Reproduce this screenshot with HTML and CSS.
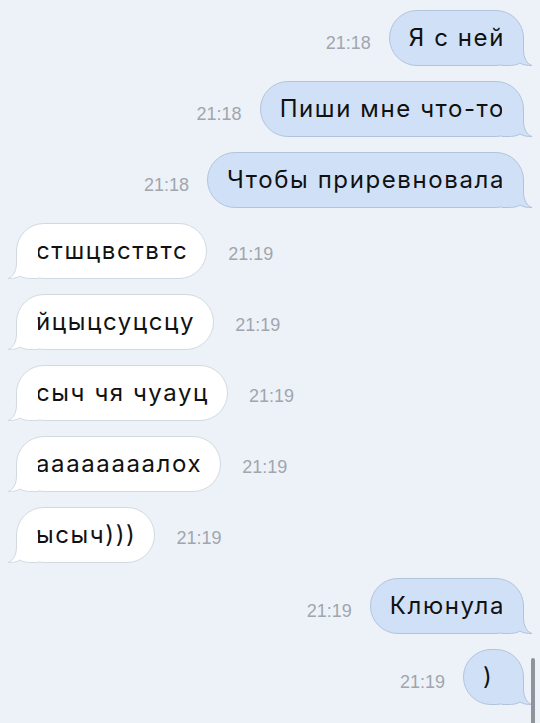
FILE: index.html
```html
<!DOCTYPE html>
<html lang="ru">

<head>
    <meta charset="UTF-8">
    <meta name="viewport" content="width=device-width, initial-scale=1.0">
    <title>Сообщения</title>
    <link rel="stylesheet" href="styles.css">
</head>

<body>
    <div id="chat">
        <div class="row out">
            <span class="time">21:18</span>
            <div class="bubble">Я с ней
                <svg class="tail" viewBox="0 0 30 30"><path class="fill" d="M21.5 0 L21.5 14 C21.5 22 25 28 30 29.5 C25 29.5 21 29 18 27 C15 29 11 29.5 6 29.5 L0 29.5 L0 0 Z"/><path class="edge" d="M21.5 0 L21.5 14 C21.5 22 25 28 30 29.5 C25 29.5 21 29 18 27 C15 29 11 29.5 6 29.5 L0 29.5"/></svg>
            </div>
        </div>
        <div class="row out">
            <span class="time">21:18</span>
            <div class="bubble">Пиши мне что-то
                <svg class="tail" viewBox="0 0 30 30"><path class="fill" d="M21.5 0 L21.5 14 C21.5 22 25 28 30 29.5 C25 29.5 21 29 18 27 C15 29 11 29.5 6 29.5 L0 29.5 L0 0 Z"/><path class="edge" d="M21.5 0 L21.5 14 C21.5 22 25 28 30 29.5 C25 29.5 21 29 18 27 C15 29 11 29.5 6 29.5 L0 29.5"/></svg>
            </div>
        </div>
        <div class="row out">
            <span class="time">21:18</span>
            <div class="bubble">Чтобы приревновала
                <svg class="tail" viewBox="0 0 30 30"><path class="fill" d="M21.5 0 L21.5 14 C21.5 22 25 28 30 29.5 C25 29.5 21 29 18 27 C15 29 11 29.5 6 29.5 L0 29.5 L0 0 Z"/><path class="edge" d="M21.5 0 L21.5 14 C21.5 22 25 28 30 29.5 C25 29.5 21 29 18 27 C15 29 11 29.5 6 29.5 L0 29.5"/></svg>
            </div>
        </div>

        <div class="row in">
            <div class="bubble">стшцвствтс
                <svg class="tail" viewBox="0 0 30 30"><path class="fill" d="M21.5 0 L21.5 14 C21.5 22 25 28 30 29.5 C25 29.5 21 29 18 27 C15 29 11 29.5 6 29.5 L0 29.5 L0 0 Z"/><path class="edge" d="M21.5 0 L21.5 14 C21.5 22 25 28 30 29.5 C25 29.5 21 29 18 27 C15 29 11 29.5 6 29.5 L0 29.5"/></svg>
            </div>
            <span class="time">21:19</span>
        </div>
        <div class="row in">
            <div class="bubble">йцыцсуцсцу
                <svg class="tail" viewBox="0 0 30 30"><path class="fill" d="M21.5 0 L21.5 14 C21.5 22 25 28 30 29.5 C25 29.5 21 29 18 27 C15 29 11 29.5 6 29.5 L0 29.5 L0 0 Z"/><path class="edge" d="M21.5 0 L21.5 14 C21.5 22 25 28 30 29.5 C25 29.5 21 29 18 27 C15 29 11 29.5 6 29.5 L0 29.5"/></svg>
            </div>
            <span class="time">21:19</span>
        </div>
        <div class="row in">
            <div class="bubble">сыч чя чуауц
                <svg class="tail" viewBox="0 0 30 30"><path class="fill" d="M21.5 0 L21.5 14 C21.5 22 25 28 30 29.5 C25 29.5 21 29 18 27 C15 29 11 29.5 6 29.5 L0 29.5 L0 0 Z"/><path class="edge" d="M21.5 0 L21.5 14 C21.5 22 25 28 30 29.5 C25 29.5 21 29 18 27 C15 29 11 29.5 6 29.5 L0 29.5"/></svg>
            </div>
            <span class="time">21:19</span>
        </div>
        <div class="row in">
            <div class="bubble">аааааааалох
                <svg class="tail" viewBox="0 0 30 30"><path class="fill" d="M21.5 0 L21.5 14 C21.5 22 25 28 30 29.5 C25 29.5 21 29 18 27 C15 29 11 29.5 6 29.5 L0 29.5 L0 0 Z"/><path class="edge" d="M21.5 0 L21.5 14 C21.5 22 25 28 30 29.5 C25 29.5 21 29 18 27 C15 29 11 29.5 6 29.5 L0 29.5"/></svg>
            </div>
            <span class="time">21:19</span>
        </div>
        <div class="row in">
            <div class="bubble">ысыч)))
                <svg class="tail" viewBox="0 0 30 30"><path class="fill" d="M21.5 0 L21.5 14 C21.5 22 25 28 30 29.5 C25 29.5 21 29 18 27 C15 29 11 29.5 6 29.5 L0 29.5 L0 0 Z"/><path class="edge" d="M21.5 0 L21.5 14 C21.5 22 25 28 30 29.5 C25 29.5 21 29 18 27 C15 29 11 29.5 6 29.5 L0 29.5"/></svg>
            </div>
            <span class="time">21:19</span>
        </div>

        <div class="row out">
            <span class="time">21:19</span>
            <div class="bubble">Клюнула
                <svg class="tail" viewBox="0 0 30 30"><path class="fill" d="M21.5 0 L21.5 14 C21.5 22 25 28 30 29.5 C25 29.5 21 29 18 27 C15 29 11 29.5 6 29.5 L0 29.5 L0 0 Z"/><path class="edge" d="M21.5 0 L21.5 14 C21.5 22 25 28 30 29.5 C25 29.5 21 29 18 27 C15 29 11 29.5 6 29.5 L0 29.5"/></svg>
            </div>
        </div>
        <div class="row out">
            <span class="time">21:19</span>
            <div class="bubble">)
                <svg class="tail" viewBox="0 0 30 30"><path class="fill" d="M21.5 0 L21.5 14 C21.5 22 25 28 30 29.5 C25 29.5 21 29 18 27 C15 29 11 29.5 6 29.5 L0 29.5 L0 0 Z"/><path class="edge" d="M21.5 0 L21.5 14 C21.5 22 25 28 30 29.5 C25 29.5 21 29 18 27 C15 29 11 29.5 6 29.5 L0 29.5"/></svg>
            </div>
        </div>
    </div>

    <div class="scrollbar"></div>
</body>

</html>
```

FILE: styles.css
```css
body {
    margin: 0;
    background-color: #edf2f8;
    font-family: Inter, "Liberation Sans", Arial, sans-serif;
    height: 723px;
    overflow: hidden;
}

#chat {
    display: flex;
    flex-direction: column;
    gap: 15px;
    padding: 10px 16px 0 16px;
}

.row {
    display: flex;
    align-items: center;
    gap: 18px;
}

.row.out {
    justify-content: flex-end;
}

.row.in {
    justify-content: flex-start;
    gap: 21px;
}

.time {
    font-family: "Liberation Sans", Arial, sans-serif;
    font-size: 18px;
    color: #a0a6ae;
    padding-top: 10px;
}

.row.in .time {
    padding-top: 6px;
}

.bubble {
    position: relative;
    box-sizing: border-box;
    height: 56px;
    min-width: 61px;
    display: flex;
    align-items: center;
    padding: 0 18px 1px 19px;
    border-radius: 28px;
    font-size: 24px;
    letter-spacing: 1.6px;
    color: #111111;
    white-space: nowrap;
}

.out .bubble {
    background-color: #d0e1f7;
    border: 1px solid #b2c4db;
}

.in .bubble {
    background-color: #ffffff;
    border: 1px solid #d3d9e1;
}

.tail {
    position: absolute;
    bottom: -1px;
    width: 30px;
    height: 30px;
}

.out .tail {
    right: -9px;
}

.in .tail {
    left: -9px;
    transform: scaleX(-1);
}

.tail .edge {
    fill: none;
    stroke-width: 1;
}

.out .tail .fill {
    fill: #d0e1f7;
}

.out .tail .edge {
    stroke: #b2c4db;
}

.in .tail .fill {
    fill: #ffffff;
}

.in .tail .edge {
    stroke: #d3d9e1;
}

.scrollbar {
    position: fixed;
    right: 5px;
    top: 658px;
    width: 4px;
    height: 70px;
    border-radius: 2px;
    background-color: #8f949a;
}
```
